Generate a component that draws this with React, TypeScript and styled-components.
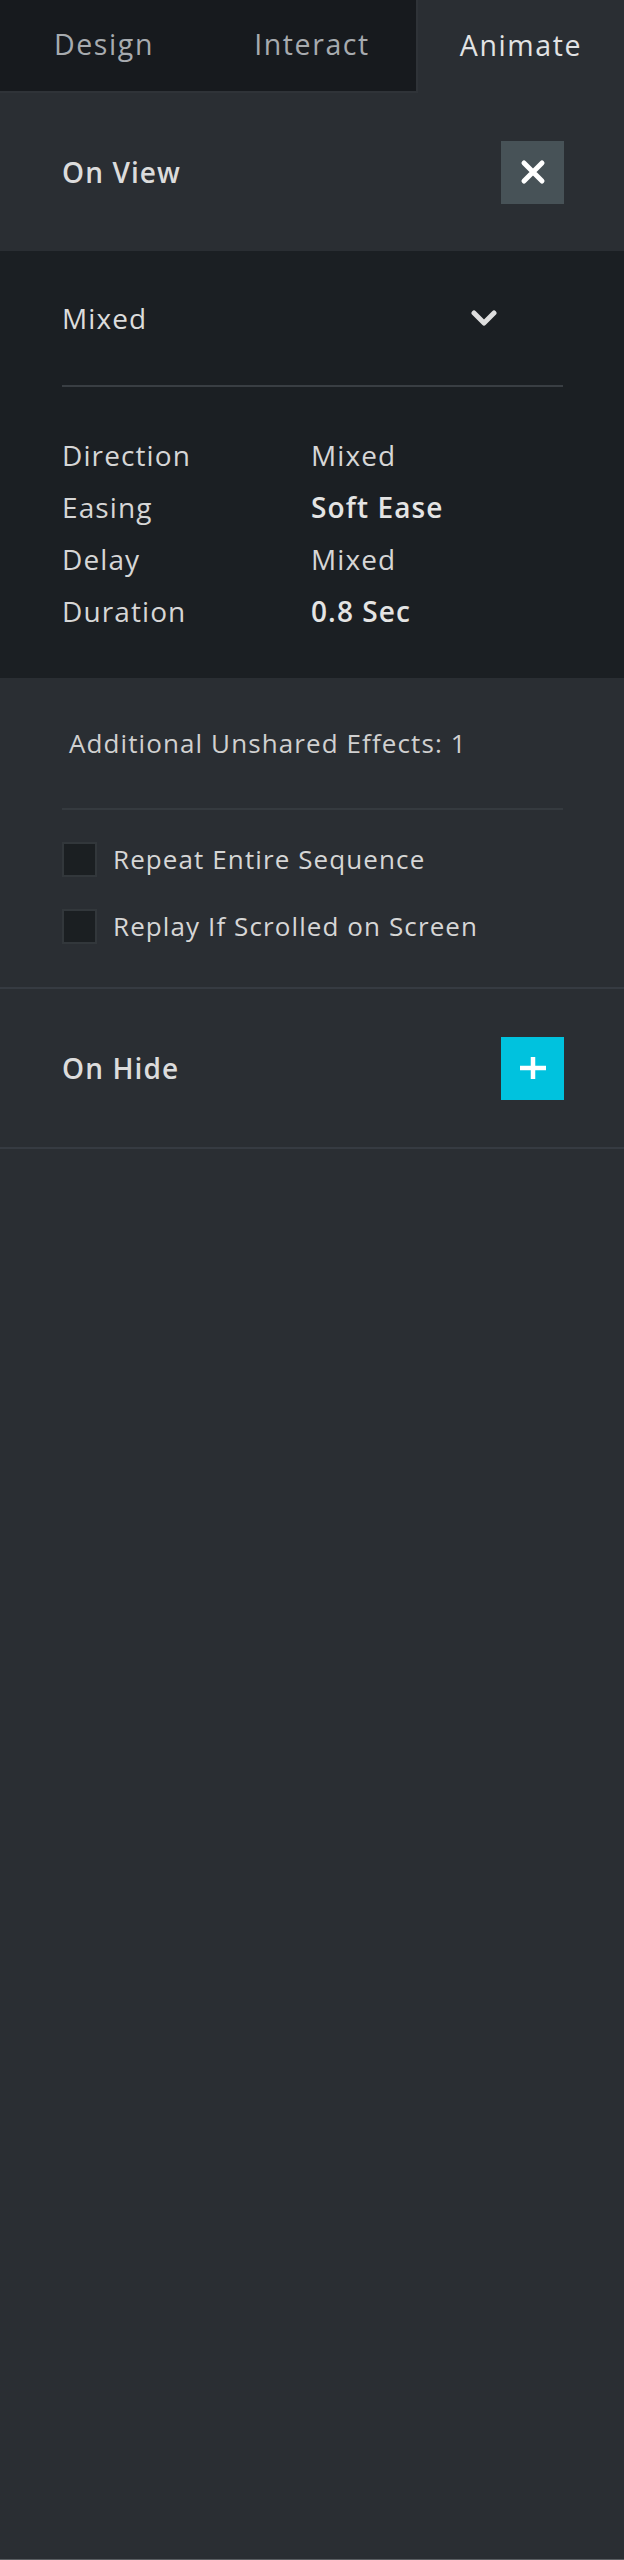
import React from "react";
import styled, { createGlobalStyle } from "styled-components";

const Global = createGlobalStyle`
  html, body { margin: 0; padding: 0; background: #2a2e33; }
  body { font-family: "Open Sans", "Noto Sans", sans-serif; -webkit-font-smoothing: antialiased; }
  * { box-sizing: border-box; }
`;

const Panel = styled.div`
  width: 624px;
  min-height: 2560px;
  background: #2a2e33;
  color: #dadada;
  border-bottom: 1px solid #5a5e62;
  display: flex;
  flex-direction: column;
  letter-spacing: 1.1px;
`;

const TabBar = styled.div`
  display: grid;
  grid-template-columns: repeat(3, 1fr);
  height: 93px;
`;

const Tab = styled.div<{ $active?: boolean }>`
  display: flex;
  align-items: center;
  justify-content: center;
  padding-bottom: 4px;
  font-size: 28.5px;
  letter-spacing: 1.6px;
  font-weight: 500;
  color: ${(p) => (p.$active ? "#e2e3e4" : "#a7abaf")};
  background: ${(p) => (p.$active ? "transparent" : "#171a1e")};
  border-bottom: ${(p) => (p.$active ? "none" : "2px solid #2f3338")};
  border-left: ${(p) => (p.$active ? "2px solid #2f3338" : "none")};
`;

const HeaderRow = styled.div<{ $bordered?: boolean }>`
  height: ${(p) => (p.$bordered ? 160 : 158)}px;
  display: flex;
  align-items: center;
  justify-content: space-between;
  padding: 0 60px 0 62px;
  border-bottom: ${(p) => (p.$bordered ? "2px solid #363b42" : "none")};
`;

const HeaderTitle = styled.span`
  font-size: 28px;
  font-weight: 600;
  color: #dcdcdc;
`;

const IconButton = styled.div<{ $accent?: boolean }>`
  width: 63px;
  height: 63px;
  display: flex;
  align-items: center;
  justify-content: center;
  background: ${(p) => (p.$accent ? "#00c2de" : "#475257")};
`;

const DarkSection = styled.div`
  background: #1b1f23;
  padding: 0 61px 41px 62px;
`;

const SelectRow = styled.div`
  height: 136px;
  display: flex;
  align-items: center;
  justify-content: space-between;
  padding-right: 66px;
  border-bottom: 2px solid #393e43;
  font-size: 28px;
  font-weight: 500;
  color: #dcdcdc;
`;

const PropGrid = styled.div`
  display: grid;
  grid-template-columns: 249px 1fr;
  grid-auto-rows: 52px;
  align-items: center;
  padding-top: 42px;
  font-size: 28px;
`;

const PropLabel = styled.span`
  font-weight: 500;
  color: #d6d6d6;
`;

const PropValue = styled.span<{ $strong?: boolean }>`
  font-weight: ${(p) => (p.$strong ? 600 : 500)};
  color: ${(p) => (p.$strong ? "#e4e4e4" : "#d6d6d6")};
`;

const Options = styled.div`
  padding: 0 61px 0 62px;
  border-bottom: 2px solid #363b42;
`;

const InfoRow = styled.div`
  height: 132px;
  display: flex;
  align-items: center;
  padding-left: 7px;
  font-size: 26px;
  font-weight: 500;
  color: #d0d0d0;
  border-bottom: 2px solid #353a3f;
`;

const CheckList = styled.div`
  display: flex;
  flex-direction: column;
  gap: 33px;
  padding: 32px 0 44px;
`;

const CheckRow = styled.label`
  display: flex;
  align-items: center;
  gap: 16px;
  height: 34px;
  font-size: 26px;
  font-weight: 500;
  color: #d6d6d6;
`;

const Box = styled.span`
  width: 35px;
  height: 35px;
  background: #1b1f22;
  border: 2px solid #32373b;
  flex-shrink: 0;
`;

const CloseIcon = () => (
  <svg width="28" height="28" viewBox="0 0 28 28">
    <path d="M5 5 L23 23 M23 5 L5 23" stroke="#fff" strokeWidth="5" strokeLinecap="round" />
  </svg>
);

const PlusIcon = () => (
  <svg width="28" height="28" viewBox="0 0 28 28">
    <path d="M1 14 H27 M14 3 V25" stroke="#fff" strokeWidth="4.5" />
  </svg>
);

const Chevron = () => (
  <svg width="26" height="17" viewBox="0 0 26 17">
    <path d="M3 3 L13 13 L23 3" stroke="#dedede" strokeWidth="5" fill="none" strokeLinecap="round" strokeLinejoin="round" />
  </svg>
);

const props: { label: string; value: string; strong?: boolean }[] = [
  { label: "Direction", value: "Mixed" },
  { label: "Easing", value: "Soft Ease", strong: true },
  { label: "Delay", value: "Mixed" },
  { label: "Duration", value: "0.8 Sec", strong: true },
];

export default function App() {
  return (
    <>
      <Global />
      <Panel>
        <TabBar>
          <Tab>Design</Tab>
          <Tab>Interact</Tab>
          <Tab $active>Animate</Tab>
        </TabBar>
        <HeaderRow>
          <HeaderTitle>On View</HeaderTitle>
          <IconButton>
            <CloseIcon />
          </IconButton>
        </HeaderRow>
        <DarkSection>
          <SelectRow>
            <span>Mixed</span>
            <Chevron />
          </SelectRow>
          <PropGrid>
            {props.map((p) => (
              <React.Fragment key={p.label}>
                <PropLabel>{p.label}</PropLabel>
                <PropValue $strong={p.strong}>{p.value}</PropValue>
              </React.Fragment>
            ))}
          </PropGrid>
        </DarkSection>
        <Options>
          <InfoRow>Additional Unshared Effects: 1</InfoRow>
          <CheckList>
            <CheckRow>
              <Box />
              Repeat Entire Sequence
            </CheckRow>
            <CheckRow>
              <Box />
              Replay If Scrolled on Screen
            </CheckRow>
          </CheckList>
        </Options>
        <HeaderRow $bordered>
          <HeaderTitle>On Hide</HeaderTitle>
          <IconButton $accent>
            <PlusIcon />
          </IconButton>
        </HeaderRow>
      </Panel>
    </>
  );
}
